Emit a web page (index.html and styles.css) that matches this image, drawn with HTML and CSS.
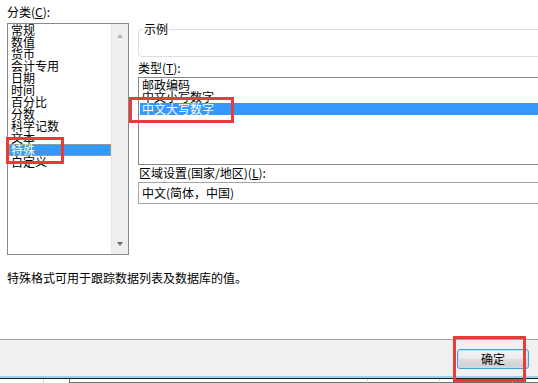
FILE: index.html
```html
<!DOCTYPE html>
<html lang="zh-CN">
<head>
<meta charset="utf-8">
<title>设置单元格格式</title>
<link rel="stylesheet" href="styles.css">
</head>
<body>
<div class="dialog">
  <div class="content">
    <div class="cols">
      <div class="left">
        <div class="label">分类(<u>C</u>):</div>
        <div class="listbox cat">
          <ul class="items">
            <li>常规</li>
            <li>数值</li>
            <li>货币</li>
            <li>会计专用</li>
            <li>日期</li>
            <li>时间</li>
            <li>百分比</li>
            <li>分数</li>
            <li>科学记数</li>
            <li>文本</li>
            <li class="sel focus">特殊</li>
            <li>自定义</li>
          </ul>
          <div class="scrollbar">
            <span class="arr up"></span>
            <span class="arr down"></span>
          </div>
          <div class="mark mark-cat"></div>
        </div>
      </div>
      <div class="right">
        <div class="group"><span class="legend">示例</span></div>
        <div class="label type-label">类型(<u>T</u>):</div>
        <div class="listbox type">
          <ul class="items">
            <li>邮政编码</li>
            <li>中文小写数字</li>
            <li class="sel">中文大写数字</li>
          </ul>
          <div class="mark mark-type"></div>
        </div>
        <div class="label region-label">区域设置(国家/地区)(<u>L</u>):</div>
        <div class="combo">中文(简体，中国)</div>
      </div>
    </div>
    <p class="desc">特殊格式可用于跟踪数据列表及数据库的值。</p>
  </div>
  <div class="footer">
    <button class="ok">确定</button>
    <div class="mark mark-ok"></div>
  </div>
  <div class="sheet">
    <div class="sheet-row">
      <span class="cell c1"></span>
      <span class="cell c2"></span>
      <span class="cell c3"></span>
      <span class="cell c4"></span>
      <span class="cell c5"></span>
      <span class="cell c6"></span>
    </div>
  </div>
</div>
</body>
</html>
```
FILE: styles.css
```css
* { box-sizing: border-box; }
html, body { margin: 0; padding: 0; }
body {
  width: 538px;
  height: 383px;
  overflow: hidden;
  background: #fff;
  font-family: "Noto Sans CJK SC", "Liberation Sans", sans-serif;
  font-size: 12px;
  color: #000;
}
.dialog { width: 538px; height: 383px; display: flex; flex-direction: column; }
.content { height: 339px; padding-left: 7px; position: relative; }
.cols { display: flex; padding-top: 5px; }
.left { width: 122px; flex: none; }
.right { flex: 1; margin-left: 9px; margin-right: -12px; display: flex; flex-direction: column; }
.label { line-height: 14px; height: 14px; white-space: nowrap; }
u { text-decoration: underline; }
.left .label { margin-bottom: 4px; }

.listbox { border: 1px solid #828790; position: relative; display: flex; background: #fff; }
.cat { height: 232px; }
.items { list-style: none; margin: 0; padding: 0 0 0 1px; flex: 1; }
.items li { height: 12px; line-height: 12px; padding-left: 2px; white-space: nowrap; overflow: visible; }
.items li.sel { background: #3399ff; color: #fff; }
.items li.focus { outline: 1px dotted #e89a3c; outline-offset: -1px; }
.scrollbar {
  width: 17px; flex: none; background: #efefef; border-left: 1px solid #e6e6e6;
  display: flex; flex-direction: column; justify-content: space-between; align-items: center;
  padding: 10px 0 8px;
}
.arr { width: 0; height: 0; border-left: 3.5px solid transparent; border-right: 3.5px solid transparent; }
.arr.up { border-bottom: 4px solid #b8b8b8; }
.arr.down { border-top: 4px solid #6a6a6a; }

.group { margin-top: 24px; height: 28px; border: 1px solid #d5dfe5; border-radius: 4px; padding-left: 4px; }
.legend { display: inline-block; margin-top: -8px; line-height: 14px; background: #fff; padding: 0 1px; vertical-align: top; }
.type-label { margin-top: 4px; margin-bottom: 2px; }
.type { height: 88px; border-right: none; }
.type .items { padding-top: 1px; }
.region-label { margin-top: 1px; padding-left: 1px; }
.combo { margin-top: 2px; height: 22px; border: 1px solid #a5a5a5; border-right: none; line-height: 20px; padding-left: 3px; white-space: nowrap; }

.desc { margin: 16px 0 0; line-height: 14px; white-space: nowrap; }

.footer {
  height: 37px; border-top: 1px solid #a0a0a0; background: #f0f0f0;
  display: flex; justify-content: flex-end; align-items: flex-start;
  padding: 9px 9px 0 0; position: relative; flex: none;
}
.ok {
  width: 72px; height: 20px; margin: 0; padding: 0;
  font-family: inherit; font-size: 12px; color: #000; line-height: 16px;
  border: 1px solid #3ca4dc; border-radius: 3px;
  background: linear-gradient(#f4f4f4, #ebebeb 48%, #dddddd 52%, #cfcfcf);
  box-shadow: inset 0 0 0 1px #b9e3f7;
}

.mark { position: absolute; border: 3px solid #ea3b3b; pointer-events: none; }
.mark-cat { left: -2px; top: 113px; width: 58px; height: 27px; }
.mark-type { left: -10px; top: 19px; width: 105px; height: 26px; }
.mark-ok { left: 453px; top: -4px; width: 73px; height: 46px; }

.sheet { flex: 1; border-top: 2px solid #9fd0ea; }
.sheet-row { display: flex; height: 100%; border-top: 1px solid #1e1e1e; }
.cell { height: 100%; border-right: 1px solid #d4d9e2; }
.c1 { width: 44px; }
.c2 { width: 26px; border-right-color: #707070; }
.c3 { width: 298px; border-bottom: 1px solid #707070; }
.c4 { width: 72px; border-bottom: 1px solid #707070; }
.c5 { width: 73px; border-bottom: 1px solid #707070; }
.c6 { flex: 1; border-bottom: 1px solid #707070; border-right: none; }
```
